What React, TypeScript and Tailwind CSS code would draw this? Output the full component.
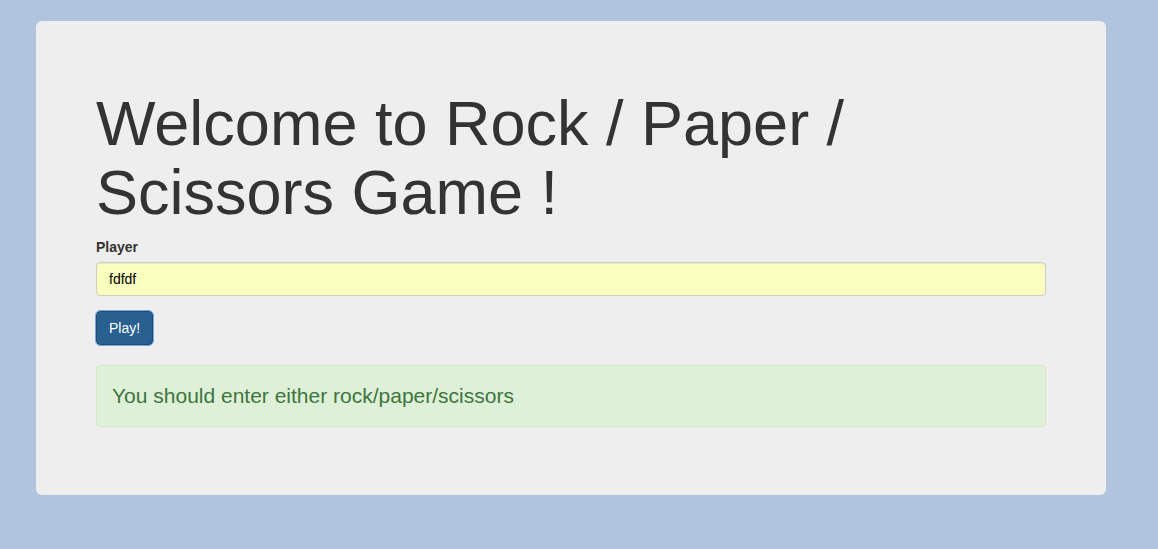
export default function App() {
  return (
    <div className="min-h-screen w-full bg-[#b0c4de] pt-[21px] pl-[36px]" style={{ fontFamily: '"Liberation Sans", Arial, Helvetica, sans-serif' }}>
      <div className="w-[1070px] rounded-[6px] bg-[#eeeeee] px-[60px] pt-[48px] pb-[48px] text-[#333333]">
        <h1 className="mt-[20px] mb-[9px] text-[63px] leading-[1.1] font-normal">
          Welcome to Rock / Paper / Scissors Game !
        </h1>
        <form onSubmit={(e) => e.preventDefault()}>
          <div className="mb-[15px]">
            <label className="mb-[5px] block text-[14px] leading-[20px] font-bold">Player</label>
            <input
              defaultValue="fdfdf"
              className="block h-[34px] w-full rounded-[4px] border border-[#cccccc] bg-[#faffbd] px-[12px] py-[6px] text-[14px] leading-[20px] text-black shadow-[inset_0_1px_1px_rgba(0,0,0,0.075)] outline-none"
            />
          </div>
          <button
            type="submit"
            className="h-[34px] rounded-[4px] border border-[#204d74] bg-[#286090] px-[12px] text-[14px] leading-[20px] text-white outline outline-1 outline-[#7aa6e6]"
          >
            Play!
          </button>
        </form>
        <div className="mt-[20px] mb-[20px] rounded-[4px] border border-[#d6e9c6] bg-[#dff0d8] p-[15px] text-[21px] leading-[30px] text-[#3c763d]">
          You should enter either rock/paper/scissors
        </div>
      </div>
    </div>
  );
}
